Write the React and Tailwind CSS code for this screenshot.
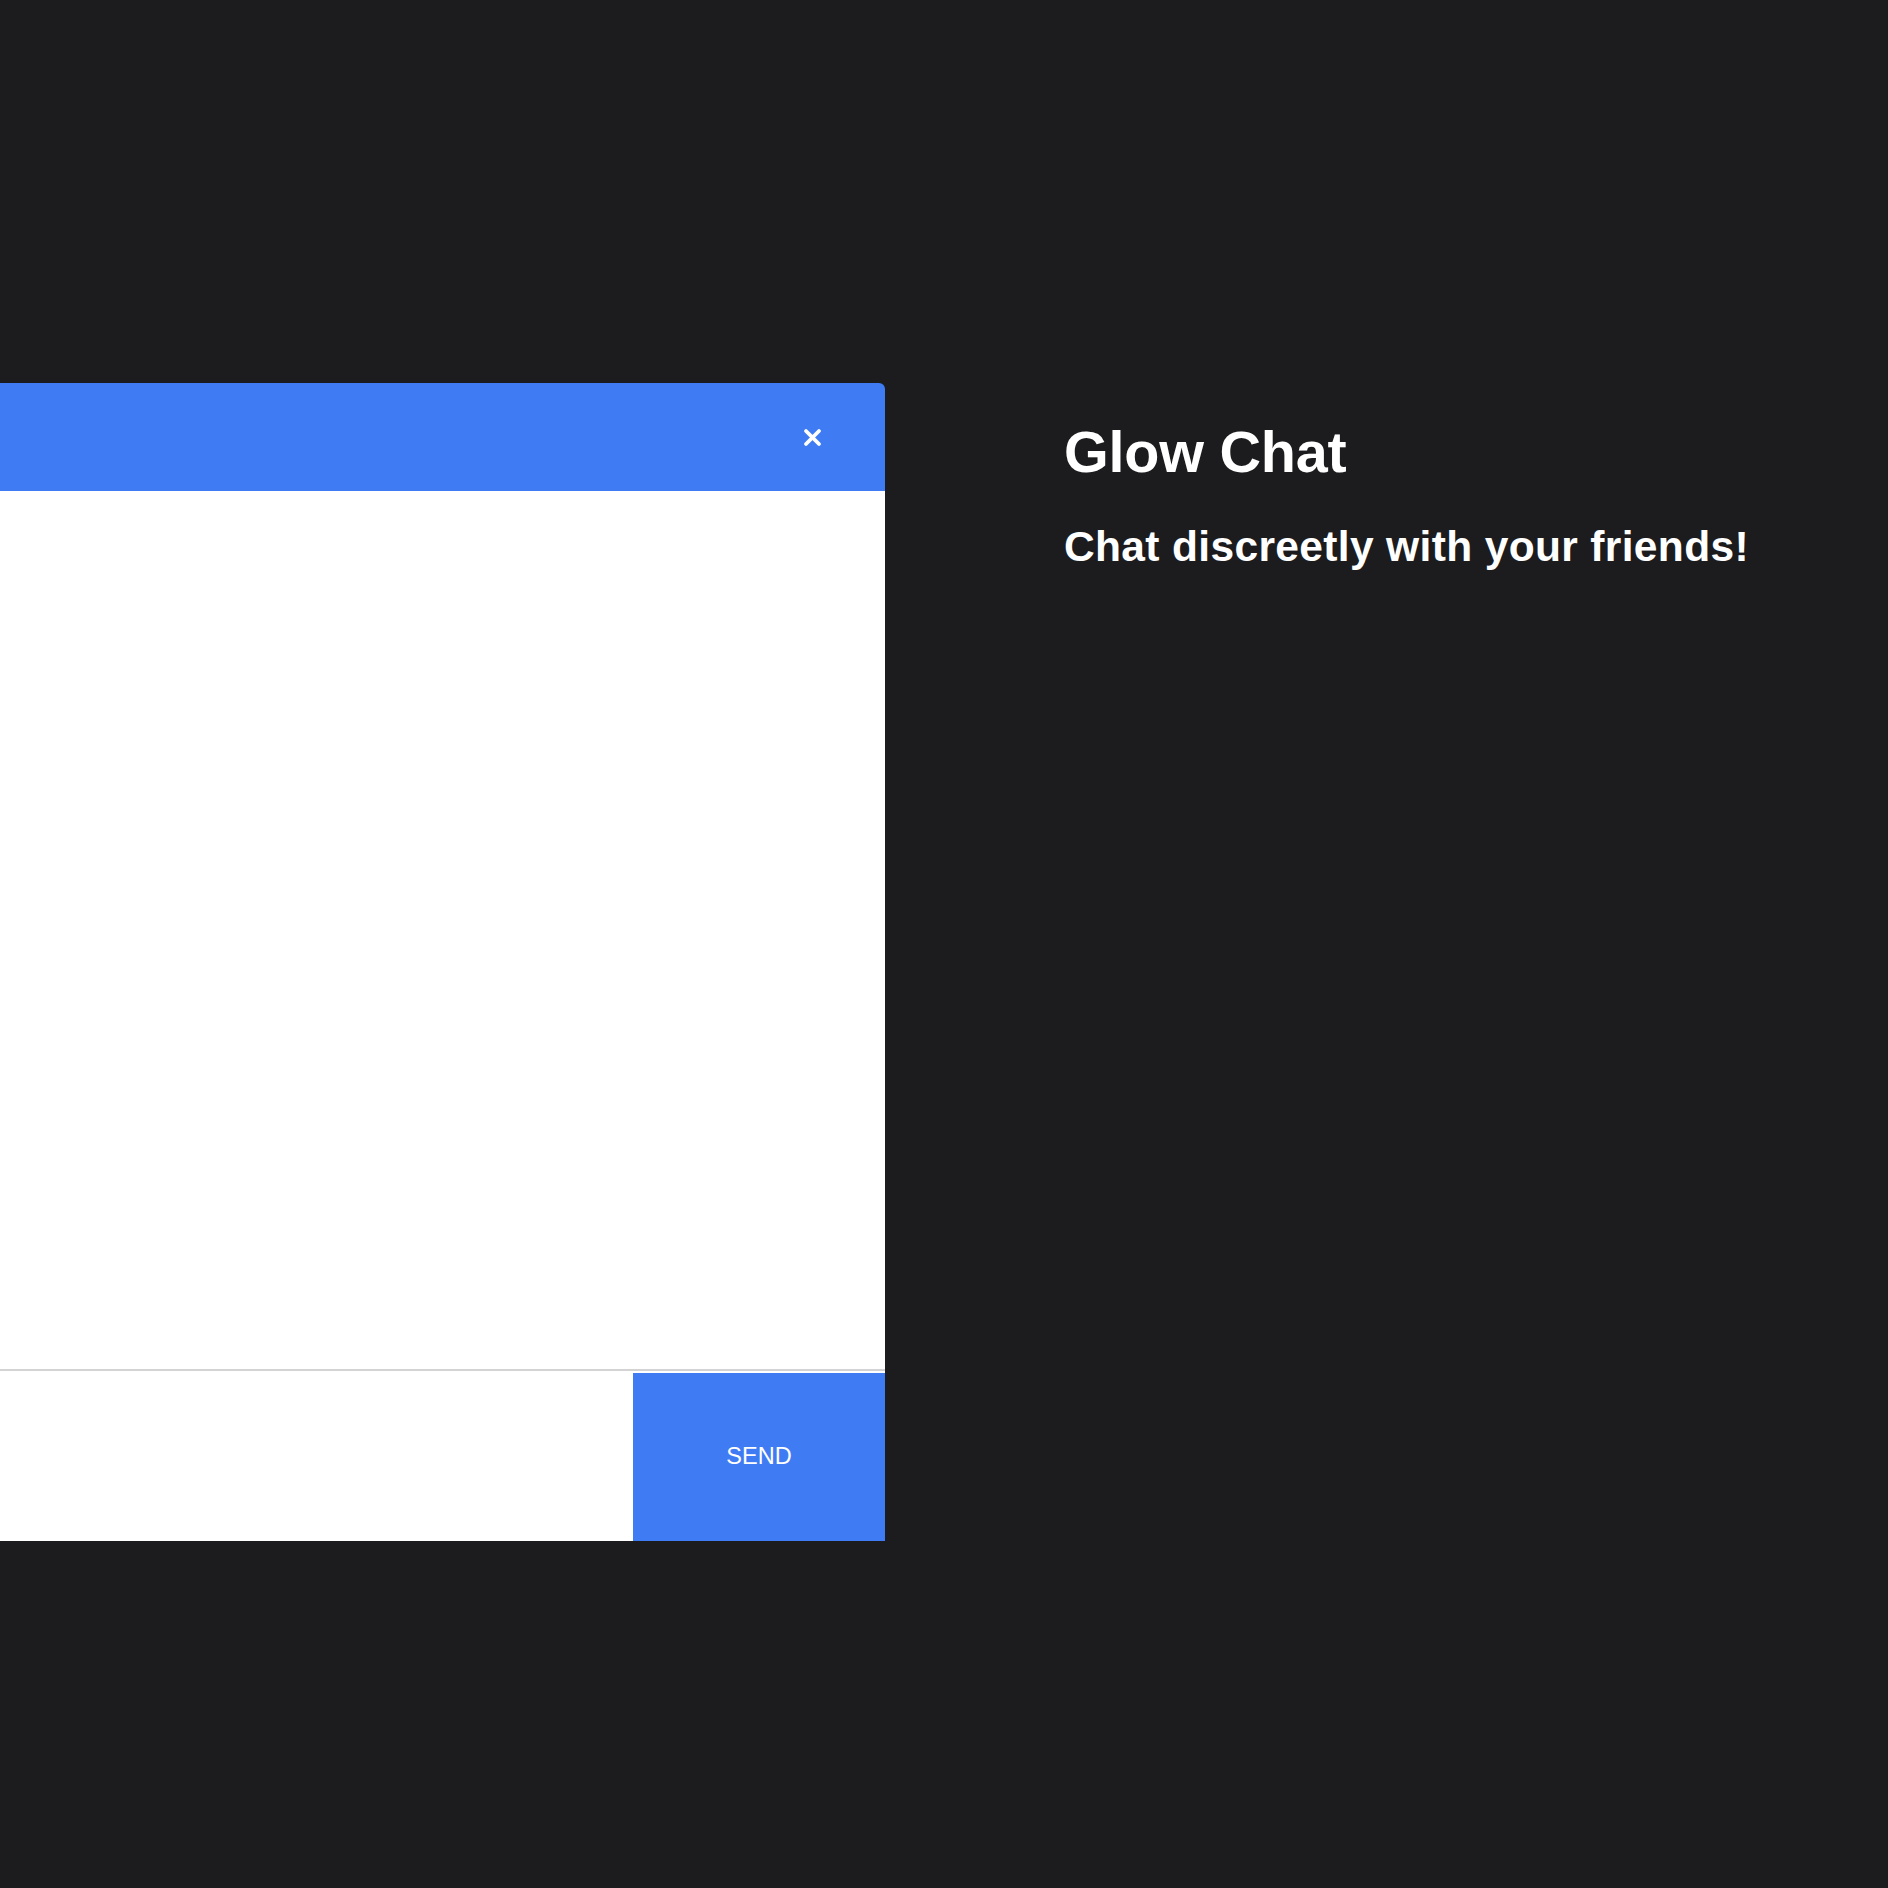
export default function App() {
  return (
    <div className="min-h-[1888px] bg-[#1c1c1e] flex items-start pt-[383px] overflow-hidden" style={{ fontFamily: '"Liberation Sans", Arial, sans-serif' }}>
      {/* CHAT PANEL */}
      <div className="w-[1000px] ml-[-115px] shrink-0 flex flex-col rounded-t-md overflow-hidden">
        <div className="h-[108px] bg-[#3f7cf4] flex items-center justify-end pr-[63px]">
          <button className="w-[19px] h-[19px] flex items-center justify-center">
            <svg width="19" height="19" viewBox="0 0 19 19">
              <path d="M3 3 L16 16 M16 3 L3 16" stroke="white" strokeWidth="3.8" strokeLinecap="round" />
            </svg>
          </button>
        </div>
        <div className="h-[878px] bg-white"></div>
        <div className="border-t-2 border-[#d3d3d3] bg-white pt-[2px] flex">
          <input className="flex-1 h-[168px] outline-none bg-white px-4" />
          <button className="w-[252px] h-[168px] bg-[#3f7cf4] text-white text-[23.5px] flex items-center justify-center">
            SEND
          </button>
        </div>
      </div>

      {/* INTRO */}
      <div className="ml-[179px] pt-[41px] text-white">
        <h1 className="text-[57.5px] leading-none font-bold tracking-[-0.2px]">Glow Chat</h1>
        <p className="mt-[44px] text-[42.5px] leading-none font-bold tracking-[0.35px]">Chat discreetly with your friends!</p>
      </div>
    </div>
  )
}
